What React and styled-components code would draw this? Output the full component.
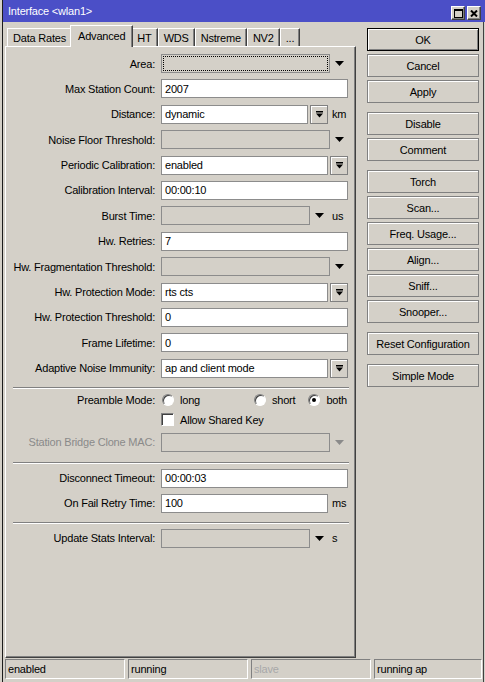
import React from 'react';
import styled, { createGlobalStyle, css } from 'styled-components';

const GlobalStyle = createGlobalStyle`
  html, body {
    margin: 0;
    padding: 0;
    background: #d4d0c8;
  }
  body {
    font-family: "Liberation Sans", Arial, sans-serif;
    font-size: 11px;
    letter-spacing: -0.2px;
    color: #000;
  }
  * {
    box-sizing: border-box;
  }
`;

const Window = styled.div`
  width: 485px;
  height: 682px;
  padding-left: 3px;
  background: #d4d0c8;
  box-shadow: inset 2px 0 0 #d4d0c8, inset 3px 0 0 #1c1c1c, inset -1px 0 0 #d4d0c8, inset -2px 0 0 #404040;
  display: flex;
  flex-direction: column;
  overflow: hidden;
`;

const TitleBar = styled.div`
  height: 22px;
  background: #4b4fc7;
  color: #fff;
  display: flex;
  align-items: center;
  padding: 0 4px 0 5px;
`;

const Title = styled.div`
  flex: 1;
  white-space: nowrap;
`;

const TitleButtons = styled.div`
  display: flex;
  gap: 2px;
  margin-top: 4px;
`;

const TitleButton = styled.div`
  width: 14px;
  height: 14px;
  background: #d4d0c8;
  border: 1px solid;
  border-color: #fff #404040 #404040 #fff;
  box-shadow: inset -1px -1px 0 #808080;
  display: flex;
  align-items: center;
  justify-content: center;
`;

const Main = styled.div`
  display: flex;
  padding: 3px 0 0 2px;
`;

const LeftColumn = styled.div`
  width: 351px;
  display: flex;
  flex-direction: column;
`;

const TabStrip = styled.div`
  display: flex;
  align-items: flex-end;
  height: 21px;
  padding-left: 2px;
`;

const Tab = styled.div`
  position: relative;
  height: 18px;
  padding: 0 5px;
  background: #d4d0c8;
  border-top: 1px solid #fff;
  border-left: 1px solid #fff;
  border-right: 1px solid #404040;
  box-shadow: inset -1px 0 0 #808080;
  display: flex;
  align-items: center;
  white-space: nowrap;
  ${(p) => p.$active && css`
    height: 22px;
    margin: 0 -2px -1px;
    padding: 0 7px 2px;
    z-index: 1;
  `}
`;

const Panel = styled.div`
  height: 612px;
  border-top: 1px solid #fff;
  border-left: 1px solid #fff;
  border-right: 1px solid #404040;
  border-bottom: 1px solid #404040;
  box-shadow: inset -1px -1px 0 #808080;
  padding: 7px 6px 0 7px;
`;

const Form = styled.div`
  display: grid;
  grid-template-columns: 142px 187px;
  column-gap: 6px;
  row-gap: ${(p) => p.$gap || 6}px;
  align-items: center;
`;

const Label = styled.div`
  text-align: right;
  white-space: nowrap;
  color: ${(p) => (p.$disabled ? '#8a8a8a' : '#000')};
`;

const Field = styled.div`
  display: flex;
  align-items: center;
  padding: ${(p) => p.$pad || '0'};
`;

const TextBox = styled.div`
  flex: 1;
  min-width: 0;
  height: 19px;
  background: ${(p) => (p.$disabled ? '#d4d0c8' : '#fff')};
  border: 1px solid #8c8c8c;
  padding: 0 3px;
  display: flex;
  align-items: center;
  white-space: nowrap;
  overflow: hidden;
  ${(p) => p.$focused && css`
    outline: 1px dotted #000;
    outline-offset: -3px;
  `}
`;

const DropButton = styled.div`
  width: 18px;
  height: 19px;
  margin-left: 2px;
  background: #d4d0c8;
  border: 1px solid #808080;
  box-shadow: inset 1px 1px 0 #fff;
  display: flex;
  align-items: center;
  justify-content: center;
`;

const Arrow = styled.div`
  width: 18px;
  display: flex;
  justify-content: center;
  color: ${(p) => (p.$disabled ? '#8a8a8a' : '#000')};
`;

const Unit = styled.div`
  width: 20px;
  padding-left: 4px;
  white-space: nowrap;
`;

const Separator = styled.div`
  height: 2px;
  border-top: 1px solid #808080;
  border-bottom: 1px solid #fff;
  margin-top: ${(p) => p.$top}px;
  margin-bottom: ${(p) => p.$bottom}px;
`;

const Option = styled.div`
  display: flex;
  align-items: center;
  gap: 6px;
  height: 14px;
  margin-left: ${(p) => (p.$push ? 'auto' : `${p.$space || 0}px`)};
`;

const Radio = styled.span`
  position: relative;
  width: 12px;
  height: 12px;
  border-radius: 50%;
  background: #fff;
  border: 1px solid;
  border-color: #808080 #fff #fff #808080;
  box-shadow: inset 1px 1px 0 #404040;
  ${(p) => p.$checked && css`
    &::after {
      content: '';
      position: absolute;
      left: 3px;
      top: 3px;
      width: 4px;
      height: 4px;
      border-radius: 50%;
      background: #000;
    }
  `}
`;

const Checkbox = styled.span`
  width: 13px;
  height: 13px;
  background: #fff;
  border: 1px solid;
  border-color: #808080 #fff #fff #808080;
  box-shadow: inset 1px 1px 0 #404040;
`;

const ButtonColumn = styled.div`
  width: 112px;
  margin-left: 11px;
  padding-top: 3px;
  display: flex;
  flex-direction: column;
  gap: 3px;
`;

const Button = styled.button`
  height: 23px;
  padding: 0;
  margin-top: ${(p) => (p.$spaced ? '6px' : '0')};
  background: #d4d0c8;
  border: 1px solid ${(p) => (p.$default ? '#000' : '#808080')};
  box-shadow: inset 1px 1px 0 #fff${(p) => (p.$default ? ', inset -1px -1px 0 #808080' : '')};
  font: inherit;
  letter-spacing: inherit;
  color: #000;
  white-space: nowrap;
`;

const StatusBar = styled.div`
  display: flex;
  gap: 3px;
  height: 20px;
  margin-top: 1px;
  padding: 0 3px 0 2px;
`;

const StatusCell = styled.div`
  width: 120px;
  flex: ${(p) => (p.$grow ? 1 : 'none')};
  border: 1px solid;
  border-color: #808080 #fff #fff #808080;
  padding-left: 2px;
  display: flex;
  align-items: center;
  color: ${(p) => (p.$muted ? '#a8a8a8' : '#000')};
  white-space: nowrap;
`;

const DownIcon = () => (
  <svg width="9" height="5" viewBox="0 0 9 5">
    <path d="M0 0h9L4.5 5z" fill="currentColor" />
  </svg>
);

const DropIcon = () => (
  <svg width="7" height="7" viewBox="0 0 7 7">
    <rect width="7" height="1.5" fill="#000" />
    <path d="M0 2.5h7L3.5 6.5z" fill="#000" />
  </svg>
);

const Row = ({ label, disabled, children }) => (
  <>
    <Label $disabled={disabled}>{label}</Label>
    <Field>{children}</Field>
  </>
);

const App = () => (
  <Window>
    <GlobalStyle />
    <TitleBar>
      <Title>Interface &lt;wlan1&gt;</Title>
      <TitleButtons>
        <TitleButton>
          <svg width="9" height="9" viewBox="0 0 9 9">
            <rect x="0.5" y="0.5" width="8" height="8" fill="none" stroke="#000" />
            <rect width="9" height="2" fill="#000" />
          </svg>
        </TitleButton>
        <TitleButton>
          <svg width="8" height="7" viewBox="0 0 8 7">
            <path d="M1 0.5L7 6.5M7 0.5L1 6.5" stroke="#000" strokeWidth="2" />
          </svg>
        </TitleButton>
      </TitleButtons>
    </TitleBar>

    <Main>
      <LeftColumn>
        <TabStrip>
          <Tab>Data Rates</Tab>
          <Tab $active>Advanced</Tab>
          <Tab>HT</Tab>
          <Tab>WDS</Tab>
          <Tab>Nstreme</Tab>
          <Tab>NV2</Tab>
          <Tab>...</Tab>
        </TabStrip>
        <Panel>
          <Form $gap={6.4}>
            <Row label="Area:">
              <TextBox $disabled $focused />
              <Arrow><DownIcon /></Arrow>
            </Row>
            <Row label="Max Station Count:">
              <TextBox>2007</TextBox>
            </Row>
            <Row label="Distance:">
              <TextBox>dynamic</TextBox>
              <DropButton><DropIcon /></DropButton>
              <Unit>km</Unit>
            </Row>
            <Row label="Noise Floor Threshold:">
              <TextBox $disabled />
              <Arrow><DownIcon /></Arrow>
            </Row>
            <Row label="Periodic Calibration:">
              <TextBox>enabled</TextBox>
              <DropButton><DropIcon /></DropButton>
            </Row>
            <Row label="Calibration Interval:">
              <TextBox>00:00:10</TextBox>
            </Row>
            <Row label="Burst Time:">
              <TextBox $disabled />
              <Arrow><DownIcon /></Arrow>
              <Unit>us</Unit>
            </Row>
            <Row label="Hw. Retries:">
              <TextBox>7</TextBox>
            </Row>
            <Row label="Hw. Fragmentation Threshold:">
              <TextBox $disabled />
              <Arrow><DownIcon /></Arrow>
            </Row>
            <Row label="Hw. Protection Mode:">
              <TextBox>rts cts</TextBox>
              <DropButton><DropIcon /></DropButton>
            </Row>
            <Row label="Hw. Protection Threshold:">
              <TextBox>0</TextBox>
            </Row>
            <Row label="Frame Lifetime:">
              <TextBox>0</TextBox>
            </Row>
            <Row label="Adaptive Noise Immunity:">
              <TextBox>ap and client mode</TextBox>
              <DropButton><DropIcon /></DropButton>
            </Row>
          </Form>

          <Separator $top={9} $bottom={4} />

          <Form>
            <Label>Preamble Mode:</Label>
            <Field $pad="0 1px">
              <Option><Radio />long</Option>
              <Option $push><Radio />short</Option>
              <Option $space={13}><Radio $checked />both</Option>
            </Field>
            <Label />
            <Field>
              <Option><Checkbox />Allow Shared Key</Option>
            </Field>
            <Row label="Station Bridge Clone MAC:" disabled>
              <TextBox $disabled />
              <Arrow $disabled><DownIcon /></Arrow>
            </Row>
          </Form>

          <Separator $top={10} $bottom={5} />

          <Form>
            <Row label="Disconnect Timeout:">
              <TextBox>00:00:03</TextBox>
            </Row>
            <Row label="On Fail Retry Time:">
              <TextBox>100</TextBox>
              <Unit>ms</Unit>
            </Row>
          </Form>

          <Separator $top={9} $bottom={5} />

          <Form>
            <Row label="Update Stats Interval:">
              <TextBox $disabled />
              <Arrow><DownIcon /></Arrow>
              <Unit>s</Unit>
            </Row>
          </Form>
        </Panel>
      </LeftColumn>

      <ButtonColumn>
        <Button $default>OK</Button>
        <Button>Cancel</Button>
        <Button>Apply</Button>
        <Button $spaced>Disable</Button>
        <Button>Comment</Button>
        <Button $spaced>Torch</Button>
        <Button>Scan...</Button>
        <Button>Freq. Usage...</Button>
        <Button>Align...</Button>
        <Button>Sniff...</Button>
        <Button>Snooper...</Button>
        <Button $spaced>Reset Configuration</Button>
        <Button $spaced>Simple Mode</Button>
      </ButtonColumn>
    </Main>

    <StatusBar>
      <StatusCell>enabled</StatusCell>
      <StatusCell>running</StatusCell>
      <StatusCell $muted>slave</StatusCell>
      <StatusCell $grow>running ap</StatusCell>
    </StatusBar>
  </Window>
);

export default App;
